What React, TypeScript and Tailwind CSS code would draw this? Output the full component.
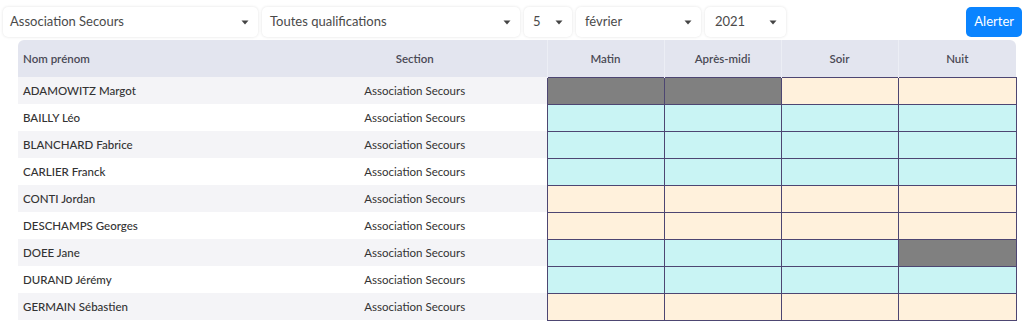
import React from 'react';

type Shift = 'g' | 'c' | 'y';

const rows: { name: string; section: string; shifts: Shift[] }[] = [
  { name: 'ADAMOWITZ Margot', section: 'Association Secours', shifts: ['g', 'g', 'c', 'c'] },
  { name: 'BAILLY Léo', section: 'Association Secours', shifts: ['y', 'y', 'y', 'y'] },
  { name: 'BLANCHARD Fabrice', section: 'Association Secours', shifts: ['y', 'y', 'y', 'y'] },
  { name: 'CARLIER Franck', section: 'Association Secours', shifts: ['y', 'y', 'y', 'y'] },
  { name: 'CONTI Jordan', section: 'Association Secours', shifts: ['c', 'c', 'c', 'c'] },
  { name: 'DESCHAMPS Georges', section: 'Association Secours', shifts: ['c', 'c', 'c', 'c'] },
  { name: 'DOEE Jane', section: 'Association Secours', shifts: ['y', 'y', 'y', 'g'] },
  { name: 'DURAND Jérémy', section: 'Association Secours', shifts: ['y', 'y', 'y', 'y'] },
  { name: 'GERMAIN Sébastien', section: 'Association Secours', shifts: ['c', 'c', 'c', 'c'] },
  // next row is only peeking in at the bottom edge
  { name: '', section: '', shifts: ['y', 'y', 'y', 'y'] },
];

const cellColor: Record<Shift, string> = {
  g: 'bg-[#808080]',
  c: 'bg-[#fff1dc]',
  y: 'bg-[#c9f4f4]',
};

const Caret = () => (
  <svg width="8" height="5" viewBox="0 0 8 5" className="shrink-0">
    <path d="M0.5 0.5 L7.5 0.5 L4 4.5 Z" fill="#444" />
  </svg>
);

const Select = ({ label, className }: { label: string; className: string }) => (
  <div
    className={`h-[30px] flex items-center justify-between pr-[9px] bg-white rounded-[5px] shadow-[0_0_3px_rgba(0,0,0,0.12)] text-[13px] text-[#4a4a4a] ${className}`}
  >
    <span>{label}</span>
    <Caret />
  </div>
);

export default function App() {
  return (
    <div className="w-[1024px] h-[321px] overflow-hidden bg-white font-['Lato','Liberation_Sans',sans-serif]">
      <div className="flex items-center justify-between pt-[7px] pl-[3px] pr-[2px]">
        <div className="grid grid-cols-[255px_258px_48px_125px_81px] gap-[4px]">
          <Select label="Association Secours" className="pl-[7px]" />
          <Select label="Toutes qualifications" className="pl-[8px]" />
          <Select label="5" className="pl-[9px]" />
          <Select label="février" className="pl-[9px]" />
          <Select label="2021" className="pl-[10px]" />
        </div>
        <button className="h-[30px] px-[8px] rounded-[5px] bg-[#0a84ff] text-white text-[13px]">
          Alerter
        </button>
      </div>

      <table className="mt-[3px] ml-[18px] w-[998px] table-fixed border-collapse text-[11.5px]">
        <colgroup>
          <col className="w-[265px]" />
          <col className="w-[264px]" />
          <col className="w-[117px]" />
          <col className="w-[117px]" />
          <col className="w-[117px]" />
          <col className="w-[118px]" />
        </colgroup>
        <thead>
          <tr className="h-[37px] bg-[#e3e5ef] text-[#4a4a55]">
            <th className="text-left pl-[5px] font-semibold rounded-tl-[6px]">Nom prénom</th>
            <th className="font-semibold">Section</th>
            <th className="font-semibold border-l border-[#eceef5]">Matin</th>
            <th className="font-semibold border-l border-[#eceef5]">Après-midi</th>
            <th className="font-semibold border-l border-[#eceef5]">Soir</th>
            <th className="font-semibold border-l border-[#eceef5] rounded-tr-[6px]">Nuit</th>
          </tr>
        </thead>
        <tbody className="text-[#333]">
          {rows.map((r, i) => (
            <tr key={i} className={`h-[27px] ${i % 2 === 0 ? 'bg-[#f4f4f7]' : 'bg-white'}`}>
              <td className="pl-[5px] font-medium">{r.name}</td>
              <td className="text-center">{r.section}</td>
              {r.shifts.map((s, j) => (
                <td key={j} className={`border border-[#4d4672] ${cellColor[s]}`} />
              ))}
            </tr>
          ))}
        </tbody>
      </table>
    </div>
  );
}
